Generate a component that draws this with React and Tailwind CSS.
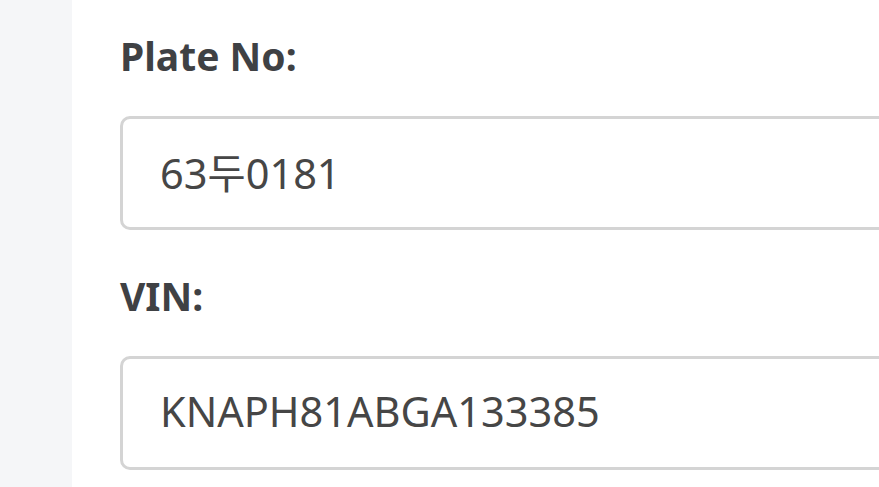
const fields = [
  { label: "Plate No:", value: "63두0181" },
  { label: "VIN:", value: "KNAPH81ABGA133385" },
];

export default function App() {
  return (
    <div
      className="flex h-[487px] w-[879px] overflow-hidden bg-white"
      style={{ fontFamily: '"Noto Sans", "Noto Sans CJK KR", sans-serif' }}
    >
      <div className="w-[72px] shrink-0 bg-[#f5f6f8]" />
      <div className="flex flex-1 flex-col pl-[48px] pt-[32px]">
        {fields.map((f, i) => (
          <div key={f.label} className={i > 0 ? "mt-[42px]" : ""}>
            <label className="block text-[39px] font-bold leading-[48px] text-[#3f4144]">
              {f.label}
            </label>
            <input
              readOnly
              value={f.value}
              className="mt-[36px] block h-[114px] w-[820px] rounded-[10px] border-[3px] border-[#d4d4d4] bg-white pb-[5px] pl-[37px] text-[41.5px] text-[#464646] outline-none"
              style={{ fontFamily: '"Noto Sans", "Noto Sans CJK KR", sans-serif' }}
            />
          </div>
        ))}
      </div>
    </div>
  );
}
